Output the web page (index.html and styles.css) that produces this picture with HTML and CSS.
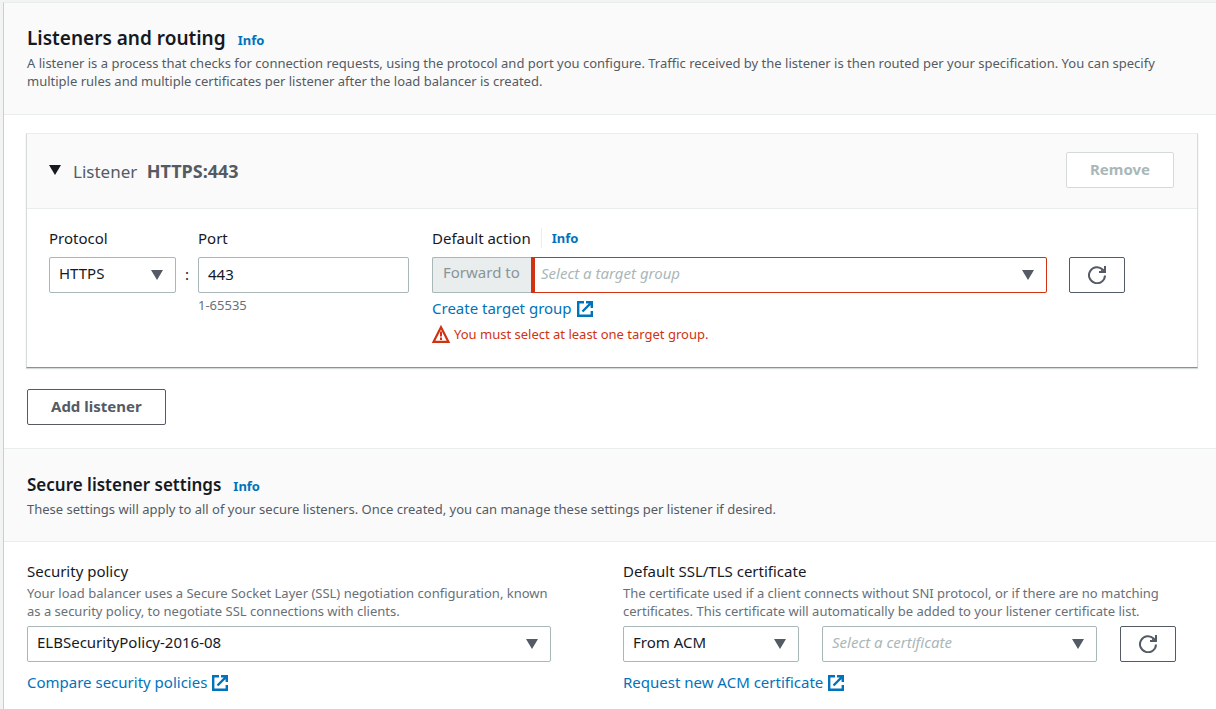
FILE: index.html
```html
<!DOCTYPE html>
<html lang="en">
<head>
<meta charset="utf-8">
<title>Listeners and routing</title>
<link rel="stylesheet" href="styles.css">
</head>
<body>
<svg class="sprite" aria-hidden="true">
  <symbol id="external" viewBox="0 0 16 16">
    <path d="M7 1.2H1.2v13.6h13.6V10M9 1.2h5.8V7M14.3 1.7L5.5 10.5" fill="none" stroke="currentColor" stroke-width="2.4"/>
  </symbol>
  <symbol id="refresh" viewBox="0 0 18 18">
    <path d="M17 9.5a8 8 0 1 1-2.4-6L16 5" fill="none" stroke="currentColor" stroke-width="2"/>
    <path d="M17 0V6H11" fill="none" stroke="currentColor" stroke-width="2"/>
    <path d="M13 3.5L16 6H13Z" fill="currentColor"/>
  </symbol>
  <symbol id="warning" viewBox="0 0 18 18">
    <path d="M9 2.2L16.4 16.8H1.6Z" fill="none" stroke="currentColor" stroke-width="2.2"/>
    <path d="M9 6.5V11.5M9 12.5V15" fill="none" stroke="currentColor" stroke-width="2"/>
  </symbol>
</svg>
<main class="panel">
  <section>
    <header class="section-header">
      <div class="title-row">
        <h1 class="title title-large">Listeners and routing</h1>
        <a class="info" href="#">Info</a>
      </div>
      <p class="description">A listener is a process that checks for connection requests, using the protocol and port you configure. Traffic received by the listener is then routed per your specification. You can specify multiple rules and multiple certificates per listener after the load balancer is created.</p>
    </header>
    <div class="section-body">
      <article class="card">
        <header class="card-header">
          <button class="toggle" type="button" aria-expanded="true">
            <span class="triangle triangle-dark"></span>
            <span class="toggle-text">Listener <strong>HTTPS:443</strong></span>
          </button>
          <button class="button button-disabled" type="button" disabled>Remove</button>
        </header>
        <div class="card-body">
          <div class="field protocol">
            <label class="label" for="protocol">Protocol</label>
            <div class="select">
              <select id="protocol"><option>HTTPS</option></select>
              <span class="triangle"></span>
            </div>
          </div>
          <span class="colon">:</span>
          <div class="field port">
            <label class="label" for="port">Port</label>
            <input class="input" id="port" type="text" value="443">
            <span class="hint">1-65535</span>
          </div>
          <div class="field action">
            <div class="label-row">
              <label class="label" for="target">Default action</label>
              <a class="info info-divided" href="#">Info</a>
            </div>
            <div class="action-control">
              <span class="addon">Forward to</span>
              <div class="select select-invalid">
                <select id="target" class="placeholder"><option>Select a target group</option></select>
                <span class="triangle"></span>
              </div>
            </div>
            <a class="link" href="#">Create target group <svg class="external"><use href="#external"/></svg></a>
            <p class="error"><svg class="icon"><use href="#warning"/></svg>You must select at least one target group.</p>
          </div>
          <button class="button button-icon" type="button" aria-label="Refresh target groups"><svg class="icon"><use href="#refresh"/></svg></button>
        </div>
      </article>
      <button class="button button-add" type="button">Add listener</button>
    </div>
  </section>
  <section>
    <header class="section-header section-divider">
      <div class="title-row">
        <h2 class="title">Secure listener settings</h2>
        <a class="info" href="#">Info</a>
      </div>
      <p class="description">These settings will apply to all of your secure listeners. Once created, you can manage these settings per listener if desired.</p>
    </header>
    <div class="settings">
      <div class="setting">
        <label class="label" for="policy">Security policy</label>
        <p class="description muted">Your load balancer uses a Secure Socket Layer (SSL) negotiation configuration, known as a security policy, to negotiate SSL connections with clients.</p>
        <div class="select">
          <select id="policy"><option>ELBSecurityPolicy-2016-08</option></select>
          <span class="triangle"></span>
        </div>
        <a class="link" href="#">Compare security policies <svg class="external"><use href="#external"/></svg></a>
      </div>
      <div class="setting">
        <label class="label" for="source">Default SSL/TLS certificate</label>
        <p class="description muted">The certificate used if a client connects without SNI protocol, or if there are no matching certificates. This certificate will automatically be added to your listener certificate list.</p>
        <div class="certificate-row">
          <div class="select source">
            <select id="source"><option>From ACM</option></select>
            <span class="triangle"></span>
          </div>
          <div class="select certificate">
            <select class="placeholder" aria-label="Certificate"><option>Select a certificate</option></select>
            <span class="triangle"></span>
          </div>
          <button class="button button-icon" type="button" aria-label="Refresh certificates"><svg class="icon"><use href="#refresh"/></svg></button>
        </div>
        <a class="link" href="#">Request new ACM certificate <svg class="external"><use href="#external"/></svg></a>
      </div>
    </div>
  </section>
</main>
</body>
</html>
```
FILE: styles.css
```css
* { box-sizing: border-box; }

body {
  margin: 0;
  padding: 2px 0 0 3px;
  background: #f2f3f3;
  color: #16191f;
  font-family: "Noto Sans", "Open Sans", sans-serif;
  font-size: 15px;
  line-height: 22px;
}

h1, h2, p { margin: 0; }
a { color: #0073bb; text-decoration: none; }
button, input, select { font: inherit; color: inherit; }

.sprite { display: none; }

.panel {
  min-height: calc(100vh - 2px);
  border-top: 1px solid #eaeded;
  border-left: 1px solid #c9cfcf;
  background: #fff;
}

.section-header {
  padding: 21px 40px 24px 23px;
  border-bottom: 1px solid #eaeded;
  background: #fafafa;
}
.title-row { display: flex; align-items: baseline; gap: 12px; margin-bottom: 2px; }
.section-divider { border-top: 1px solid #eaeded; padding: 22px 40px 23px 23px; }
.section-divider .title-row { margin-bottom: 1px; }
.title { font-size: 17px; line-height: 28px; font-weight: 600; }
.title-large { font-size: 19px; }
.info { font-size: 13px; font-weight: 700; }
.description { color: #545b64; font-size: 13px; line-height: 18px; }
.muted { color: #687078; }

.section-body { padding: 18px 18px 23px 22px; }

.card {
  margin-bottom: 21px;
  border: 1px solid #d5dbdb;
  border-top-color: #eaeded;
  border-bottom-color: #879596;
  box-shadow: 0 1px 1px #d5dbdb;
}
.card-header {
  display: flex;
  align-items: center;
  justify-content: space-between;
  padding: 18px 23px 20px 22px;
  border-bottom: 1px solid #eaeded;
  background: #fafafa;
}
.toggle {
  display: flex;
  align-items: center;
  gap: 12px;
  padding: 0;
  border: 0;
  background: none;
  color: #545b64;
  font-size: 17px;
}
.toggle-text { padding-top: 2px; }
.toggle strong { margin-left: 5px; font-size: 18px; }
.card-body {
  display: flex;
  align-items: flex-start;
  padding: 18px 72px 23px 22px;
}

.triangle {
  width: 12px;
  height: 10px;
  background: #545b64;
  clip-path: polygon(0 0, 100% 0, 50% 100%);
}
.triangle-dark { background: #16191f; }

.button {
  height: 36px;
  padding: 0 23px 2px;
  border: 1px solid #545b64;
  border-radius: 2px;
  background: #fff;
  color: #545b64;
  font-weight: 700;
}
.button-disabled { border-color: #d5dbdb; color: #aab7b8; }
.button-add { margin-left: 1px; }
.button-icon {
  display: flex;
  flex: none;
  align-items: center;
  justify-content: center;
  width: 56px;
  padding: 0;
}
.icon { flex: none; width: 18px; height: 18px; }

.field { display: flex; flex-direction: column; }
.label { line-height: 22px; }
.field .label { margin-bottom: 8px; }
.protocol { width: 127px; }
.colon { width: 22px; padding-top: 36px; text-align: center; }
.port { width: 211px; }
.action { flex: 1; margin: 0 22px 0 23px; }
.card-body > .button-icon { margin-top: 30px; }

.label-row { display: flex; align-items: flex-start; }
.info-divided { margin: 1px 0 0 10px; padding-left: 10px; border-left: 1px solid #eaeded; line-height: 20px; }

.input, .select select {
  width: 100%;
  height: 36px;
  padding: 0 9px 2px;
  border: 1px solid #aab7b8;
  border-radius: 2px;
  background: #fff;
}
.select { position: relative; }
.select select { appearance: none; padding-bottom: 4px; }
.select .triangle { position: absolute; top: 13px; right: 13px; pointer-events: none; }
.select select.placeholder { color: #aab7b8; font-style: italic; }
.action-control { display: flex; }
.addon {
  width: 99px;
  height: 36px;
  padding: 3px 0 0 10px;
  border: 1px solid #aab7b8;
  border-right: 0;
  border-radius: 2px 0 0 2px;
  background: #eaeded;
  color: #879596;
}
.select-invalid { flex: 1; }
.select-invalid select { border-color: #d13212; border-left-width: 4px; border-radius: 0 2px 2px 0; padding-left: 6px; }

.hint { color: #687078; font-size: 13px; line-height: 24px; }
.link { display: flex; align-items: center; gap: 5px; margin-top: 4px; }
.external { width: 16px; height: 16px; margin-top: 1px; }
.error {
  display: flex;
  align-items: center;
  gap: 4px;
  margin-top: 5px;
  color: #d13212;
  font-size: 13px;
  line-height: 20px;
}

.settings {
  display: grid;
  grid-template-columns: 524fr 553fr;
  gap: 72px;
  padding: 18px 40px 15px 23px;
}
.setting .description { margin: 2px 0 6px; }
.setting .link { margin-top: 9px; }
.certificate-row { display: flex; gap: 23px; }
.source { width: 176px; }
.certificate { flex: 1; }
```
